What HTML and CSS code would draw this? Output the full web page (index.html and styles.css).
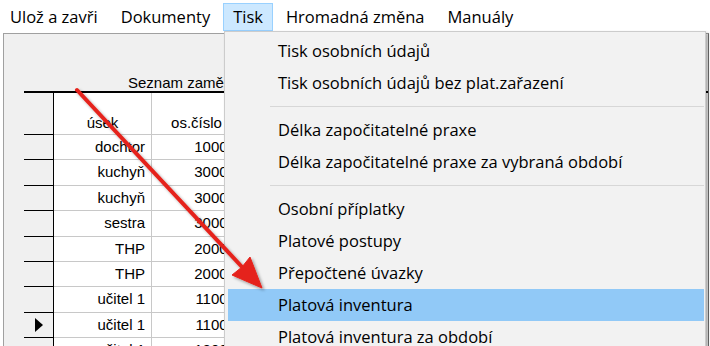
FILE: index.html
```html
<!DOCTYPE html>
<html lang="cs">
<head>
	<meta charset="UTF-8">
	<title>Seznam zaměstnanců</title>
	<link rel="stylesheet" href="styles.css">
</head>
<body>
	<div id="menubar">
		<span class="item">Ulož a zavři</span>
		<span class="item">Dokumenty</span>
		<span class="item active">Tisk</span>
		<span class="item">Hromadná změna</span>
		<span class="item">Manuály</span>
	</div>
	<div id="window">
		<div class="caption">Seznam zaměstnanců</div>
		<div class="grid">
			<div class="fix head"></div>
			<div class="cell head">úsek</div>
			<div class="cell head">os.číslo</div>

			<div class="fix"></div><div class="cell">dochtor</div><div class="cell num">10001</div>
			<div class="fix"></div><div class="cell">kuchyň</div><div class="cell num">30001</div>
			<div class="fix"></div><div class="cell">kuchyň</div><div class="cell num">30002</div>
			<div class="fix"></div><div class="cell">sestra</div><div class="cell num">30003</div>
			<div class="fix"></div><div class="cell">THP</div><div class="cell num">20001</div>
			<div class="fix"></div><div class="cell">THP</div><div class="cell num">20002</div>
			<div class="fix"></div><div class="cell">učitel 1</div><div class="cell num">11001</div>
			<div class="fix"><span class="current"></span></div><div class="cell">učitel 1</div><div class="cell num">11002</div>
			<div class="fix"></div><div class="cell">učitel 1</div><div class="cell num">12001</div>
		</div>
	</div>

	<ul id="dropdown">
		<li>Tisk osobních údajů</li>
		<li>Tisk osobních údajů bez plat.zařazení</li>
		<li class="sep"></li>
		<li>Délka započitatelné praxe</li>
		<li>Délka započitatelné praxe za vybraná období</li>
		<li class="sep"></li>
		<li>Osobní příplatky</li>
		<li>Platové postupy</li>
		<li>Přepočtené úvazky</li>
		<li class="selected">Platová inventura</li>
		<li>Platová inventura za období</li>
	</ul>

	<svg id="arrow" width="710" height="346" viewBox="0 0 710 346">
		<defs>
			<filter id="shadow" x="-10%" y="-10%" width="130%" height="130%">
				<feDropShadow dx="2" dy="2" stdDeviation="1.5" flood-color="#000" flood-opacity="0.35"/>
			</filter>
		</defs>
		<g filter="url(#shadow)" fill="#e5231b" stroke="#e5231b">
			<line x1="77" y1="90" x2="243" y2="268" stroke-width="4" stroke-linecap="round"/>
			<polygon points="262,288 232,275 242,267 250,257" stroke-width="1" stroke-linejoin="round"/>
		</g>
	</svg>
</body>
</html>
```

FILE: styles.css
```css
*{
	margin: 0;
	padding: 0;
	box-sizing: border-box;
}
html, body{
	width: 710px;
	height: 346px;
	overflow: hidden;
	background: #fff;
}
ul{
	list-style: none;
}

/* menu bar */
#menubar{
	display: flex;
	height: 33px;
	padding: 3px 0 0 0;
	font-family: "Open Sans", sans-serif;
	font-size: 16.5px;
	color: #000;
}
#menubar .item{
	height: 28px;
	line-height: 25px;
	padding: 0 9px;
	margin-right: 3px;
	border: 1px solid transparent;
}
#menubar .item.active{
	background: #cce8ff;
	border-color: #99d1ff;
}

/* form window */
#window{
	height: 313px;
	margin: 0 1px 0 3px;
	padding: 40px 0 0 20px;
	background: #f0f0f0;
	border-top: 1px solid #a0a0a0;
	border-left: 1px solid #a0a0a0;
	border-right: 1px solid #6d6d6d;
	font-family: "Liberation Sans", Arial, sans-serif;
	font-size: 15px;
	color: #000;
}
.caption{
	height: 17px;
	line-height: 17px;
	padding-left: 104px;
	white-space: nowrap;
}
.grid{
	display: grid;
	grid-template-columns: 30px 98px 90px;
	grid-template-rows: 42px;
	grid-auto-rows: 25.4px;
	border-top: 2px solid #000;
}
.fix{
	border-right: 1px solid #000;
	border-bottom: 1px solid #000;
	display: flex;
	align-items: center;
	justify-content: center;
}
.cell{
	background: #fff;
	border-right: 1px solid #c8c8c8;
	border-bottom: 1px solid #c8c8c8;
	text-align: right;
	padding-right: 6px;
	line-height: 24px;
	white-space: nowrap;
	overflow: hidden;
}
.cell.num{
	padding-right: 5px;
}
.cell.head{
	text-align: center;
	padding: 21px 0 0;
	line-height: 18px;
}
.current{
	width: 0;
	height: 0;
	border-left: 8px solid #000;
	border-top: 7px solid transparent;
	border-bottom: 7px solid transparent;
	margin-left: 1px;
}

/* Tisk dropdown */
#dropdown{
	position: absolute;
	left: 224px;
	top: 31px;
	width: 482px;
	height: 330px;
	padding: 3px 1px 0 3px;
	background: #f2f2f2;
	border: 1px solid #cccccc;
	box-shadow: 2px 2px 3px rgba(0, 0, 0, 0.3);
	font-family: "Open Sans", sans-serif;
	font-size: 16.5px;
	color: #000;
}
#dropdown li{
	height: 32px;
	line-height: 32px;
	padding-left: 50px;
	white-space: nowrap;
}
#dropdown li.sep{
	height: 0;
	margin: 0 0 14px 42px;
	padding: 0;
	border-top: 1px solid #d7d7d7;
	position: relative;
	top: 7px;
}
#dropdown li.selected{
	background: #91c9f7;
}

#arrow{
	position: absolute;
	left: 0;
	top: 0;
	pointer-events: none;
}
```
